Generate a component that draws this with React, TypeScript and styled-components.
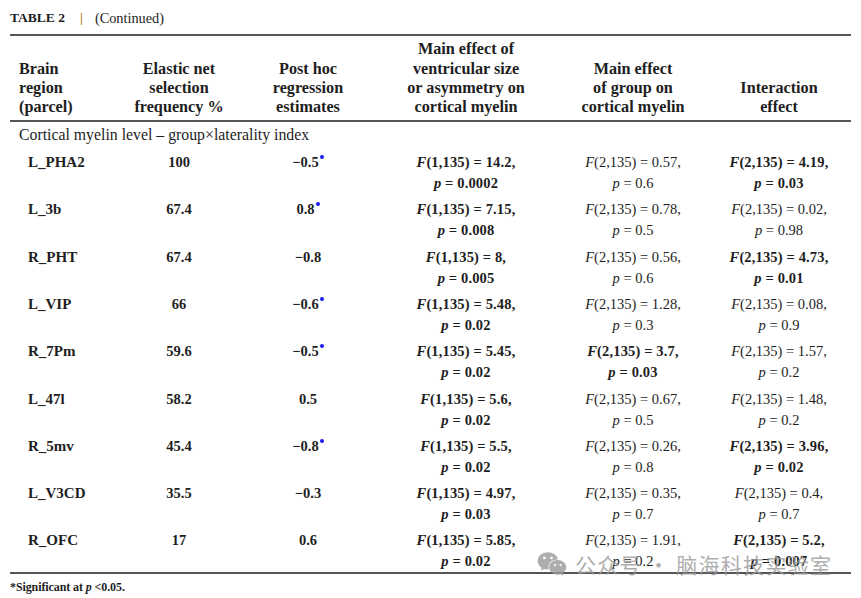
import React from 'react';
import styled, { createGlobalStyle, css } from 'styled-components';
import { FaWeixin } from 'react-icons/fa';

const Global = createGlobalStyle`
  html, body { margin: 0; padding: 0; background: #fff; }
  body { font-family: "Liberation Serif", "Times New Roman", serif; color: #1e1e1e; }
`;

const cols = css`
  display: grid;
  grid-template-columns: 110px 118px 140px 176px 158px 1fr;
  padding-right: 5px;
`;

const Page = styled.div`
  position: relative;
  width: 861px;
  height: 598px;
  box-sizing: border-box;
  padding: 0 10px;
  overflow: hidden;
`;

const Title = styled.div`
  height: 34px;
  box-sizing: border-box;
  padding-top: 2px;
  display: flex;
  align-items: center;
  font-size: 13.5px;
`;

const TitleLabel = styled.span`
  font-weight: bold;
`;

const TitleBar = styled.span`
  color: #b97a12;
  font-weight: bold;
  margin: 0 12px 0 15px;
`;

const TitleNote = styled.span`
  font-size: 14.3px;
`;

const Table = styled.div`
  border-top: 2px solid #555;
  border-bottom: 2px solid #555;
`;

const HeaderRow = styled.div`
  ${cols};
  align-items: end;
  padding-top: 4.35px;
  padding-bottom: 2.45px;
  border-bottom: 2px solid #555;
  font-weight: bold;
  font-size: 16.2px;
  line-height: 19.3px;
`;

const HeadCell = styled.div<{ $left?: boolean }>`
  text-align: ${(p) => (p.$left ? 'left' : 'center')};
  padding-left: ${(p) => (p.$left ? '9px' : '0')};
`;

const SubHeader = styled.div`
  font-size: 15.8px;
  line-height: 19px;
  padding: 3.5px 0 2.3px 9px;
`;

const DataRow = styled.div`
  ${cols};
  align-items: start;
  padding-top: 5.3px;
  font-size: 14.5px;
  line-height: 21px;
`;

const Region = styled.div`
  padding-left: 18px;
  font-weight: bold;
  font-size: 15px;
`;

const Num = styled.div`
  text-align: center;
  font-weight: bold;
`;

const Stat = styled.div<{ $bold?: boolean }>`
  text-align: center;
  font-weight: ${(p) => (p.$bold ? 'bold' : 'normal')};
  letter-spacing: ${(p) => (p.$bold ? '0.15px' : '0')};
`;

const Sig = styled.span`
  display: inline-block;
  width: 4px;
  height: 4px;
  border-radius: 50%;
  background: #1c1cf0;
  margin-left: 1px;
  vertical-align: 0.55em;
`;

const Footnote = styled.div`
  padding-top: 5px;
  font-size: 12px;
  line-height: 16px;
  font-weight: bold;
  letter-spacing: -0.1px;
`;

const Watermark = styled.div`
  position: absolute;
  left: 537px;
  top: 549px;
  display: flex;
  align-items: center;
  gap: 8px;
  color: #9a9a9a;
  opacity: 0.8;
  font-family: "Noto Sans CJK SC", "Noto Sans", sans-serif;
  font-size: 21px;
  letter-spacing: 1.3px;
  line-height: 26px;
  pointer-events: none;
`;

type S = { f: string; p: string; b: boolean };
type RowData = {
  name: string;
  freq: string;
  est: string;
  sig: boolean;
  vent: S;
  group: S;
  inter: S;
};

const s = (f: string, p: string, b: boolean): S => ({ f, p, b });

const rows: RowData[] = [
  { name: 'L_PHA2', freq: '100', est: '−0.5', sig: true, vent: s('(1,135) = 14.2,', '0.0002', true), group: s('(2,135) = 0.57,', '0.6', false), inter: s('(2,135) = 4.19,', '0.03', true) },
  { name: 'L_3b', freq: '67.4', est: '0.8', sig: true, vent: s('(1,135) = 7.15,', '0.008', true), group: s('(2,135) = 0.78,', '0.5', false), inter: s('(2,135) = 0.02,', '0.98', false) },
  { name: 'R_PHT', freq: '67.4', est: '−0.8', sig: false, vent: s('(1,135) = 8,', '0.005', true), group: s('(2,135) = 0.56,', '0.6', false), inter: s('(2,135) = 4.73,', '0.01', true) },
  { name: 'L_VIP', freq: '66', est: '−0.6', sig: true, vent: s('(1,135) = 5.48,', '0.02', true), group: s('(2,135) = 1.28,', '0.3', false), inter: s('(2,135) = 0.08,', '0.9', false) },
  { name: 'R_7Pm', freq: '59.6', est: '−0.5', sig: true, vent: s('(1,135) = 5.45,', '0.02', true), group: s('(2,135) = 3.7,', '0.03', true), inter: s('(2,135) = 1.57,', '0.2', false) },
  { name: 'L_47l', freq: '58.2', est: '0.5', sig: false, vent: s('(1,135) = 5.6,', '0.02', true), group: s('(2,135) = 0.67,', '0.5', false), inter: s('(2,135) = 1.48,', '0.2', false) },
  { name: 'R_5mv', freq: '45.4', est: '−0.8', sig: true, vent: s('(1,135) = 5.5,', '0.02', true), group: s('(2,135) = 0.26,', '0.8', false), inter: s('(2,135) = 3.96,', '0.02', true) },
  { name: 'L_V3CD', freq: '35.5', est: '−0.3', sig: false, vent: s('(1,135) = 4.97,', '0.03', true), group: s('(2,135) = 0.35,', '0.7', false), inter: s('(2,135) = 0.4,', '0.7', false) },
  { name: 'R_OFC', freq: '17', est: '0.6', sig: false, vent: s('(1,135) = 5.85,', '0.02', true), group: s('(2,135) = 1.91,', '0.2', false), inter: s('(2,135) = 5.2,', '0.007', true) },
];

const StatCell = ({ v }: { v: S }) => (
  <Stat $bold={v.b}>
    <i>F</i>
    {v.f}
    <br />
    <i>p</i> = {v.p}
  </Stat>
);

export default function App() {
  return (
    <>
      <Global />
      <Page>
        <Title>
          <TitleLabel>TABLE 2</TitleLabel>
          <TitleBar>|</TitleBar>
          <TitleNote>(Continued)</TitleNote>
        </Title>
        <Table>
          <HeaderRow>
            <HeadCell $left>
              Brain
              <br />
              region
              <br />
              (parcel)
            </HeadCell>
            <HeadCell>
              Elastic net
              <br />
              selection
              <br />
              frequency %
            </HeadCell>
            <HeadCell>
              Post hoc
              <br />
              regression
              <br />
              estimates
            </HeadCell>
            <HeadCell>
              Main effect of
              <br />
              ventricular size
              <br />
              or asymmetry on
              <br />
              cortical myelin
            </HeadCell>
            <HeadCell>
              Main effect
              <br />
              of group on
              <br />
              cortical myelin
            </HeadCell>
            <HeadCell>
              Interaction
              <br />
              effect
            </HeadCell>
          </HeaderRow>
          <SubHeader>Cortical myelin level – group×laterality index</SubHeader>
          {rows.map((r) => (
            <DataRow key={r.name}>
              <Region>{r.name}</Region>
              <Num>{r.freq}</Num>
              <Num>
                {r.est}
                {r.sig && <Sig />}
              </Num>
              <StatCell v={r.vent} />
              <StatCell v={r.group} />
              <StatCell v={r.inter} />
            </DataRow>
          ))}
        </Table>
        <Footnote>
          *Significant at <i>p</i> &lt;0.05.
        </Footnote>
        <Watermark>
          <FaWeixin size={30} />
          <span>公众号 · 脑海科技实验室</span>
        </Watermark>
      </Page>
    </>
  );
}
